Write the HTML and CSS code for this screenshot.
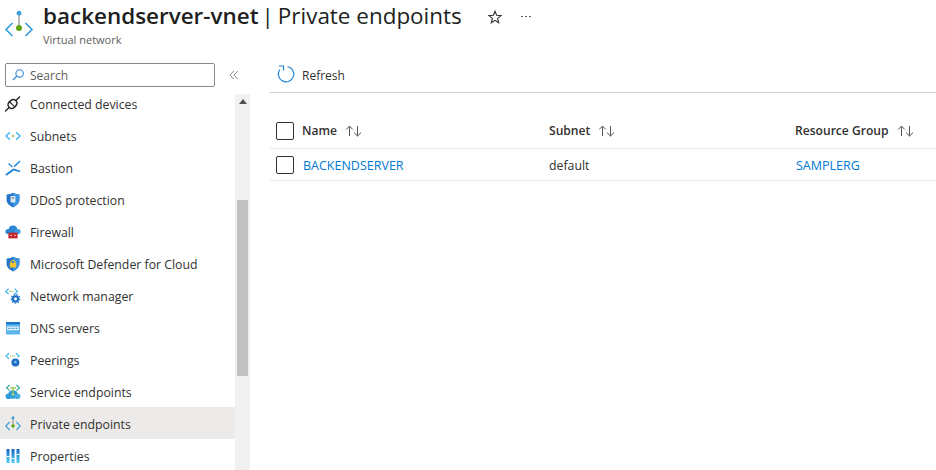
FILE: index.html
```html
<!DOCTYPE html>
<html lang="en">
<head>
<meta charset="utf-8">
<title>backendserver-vnet | Private endpoints</title>
<link rel="stylesheet" href="styles.css">
</head>
<body>
<header class="page-header">
  <svg class="logo" viewBox="0 0 34 34" width="34" height="34">
    <path d="M9.5 13 L3 19.5 L9.5 26 M22.5 13 L29 19.5 L22.5 26" fill="none" stroke="#2f9bdc" stroke-width="1.6"/>
    <path d="M16 3 V18" stroke="#8a8a8a" stroke-width="1.2"/>
    <circle cx="16" cy="3.2" r="2.4" fill="#3d9fdc"/>
    <circle cx="16" cy="18" r="3" fill="#5ea70e"/>
  </svg>
  <div class="titles">
    <h1 class="title"><b>backendserver-vnet</b><span class="sep">|</span>Private endpoints</h1>
    <div class="subtitle">Virtual network</div>
  </div>
  <svg class="star" viewBox="0 0 14 14" width="14" height="14"><path d="M7 1.2 L8.6 5.3 L13 5.6 L9.6 8.4 L10.7 12.7 L7 10.3 L3.3 12.7 L4.4 8.4 L1 5.6 L5.4 5.3 Z" fill="none" stroke="#323130" stroke-width="1.1"/></svg>
  <div class="more"><i></i><i></i><i></i></div>
</header>
<div class="content">
  <aside class="sidebar">
    <div class="search-row">
      <div class="search">
        <svg viewBox="0 0 14 14" width="14" height="14"><circle cx="8.6" cy="5.4" r="3.7" fill="none" stroke="#2b88d8" stroke-width="1.1"/><path d="M5.8 8 L1.8 12.2" stroke="#2b88d8" stroke-width="1.2"/></svg>
        <span>Search</span>
      </div>
      <svg class="collapse" viewBox="0 0 10 10" width="10" height="10"><path d="M4.8 1 L1 5 L4.8 9 M8.8 1 L5 5 L8.8 9" fill="none" stroke="#8f8d8b" stroke-width="1"/></svg>
    </div>
    <div class="nav-wrap">
      <nav class="nav">
        <a class="item"><svg viewBox="0 0 16 16" width="16" height="16"><g transform="rotate(-45 7.5 8)"><rect x="2.8" y="4.4" width="9.4" height="7.2" rx="3.4" fill="#fff" stroke="#252525" stroke-width="1.5"/><path d="M7 3.6 V12.4" stroke="#252525" stroke-width="1.1"/><path d="M-3 8 H3 M12 8 H18" stroke="#252525" stroke-width="1.3"/></g></svg><span>Connected devices</span></a>
        <a class="item"><svg viewBox="0 0 16 16" width="16" height="16"><path d="M4.8 4.4 L1 8 L4.8 11.6 M11.2 4.4 L15 8 L11.2 11.6" fill="none" stroke="#43b9ef" stroke-width="1.5"/><path d="M6.8 8 H9.2 M8 6.8 V9.2" stroke="#76b72a" stroke-width="1"/></svg><span>Subnets</span></a>
        <a class="item"><svg viewBox="0 0 16 16" width="16" height="16"><path d="M1 15 L8.5 9.5 L15 11.5" fill="none" stroke="#1a7fd6" stroke-width="1.8"/><path d="M3.5 3.5 L7.5 7 M9.2 6.6 L15 1" fill="none" stroke="#2a8fe0" stroke-width="1.6"/></svg><span>Bastion</span></a>
        <a class="item"><svg viewBox="0 0 16 16" width="16" height="16"><path d="M8 0.8 Q11 2.8 14.4 2.6 V8 Q14.4 12.5 8 15.4 Q1.6 12.5 1.6 8 V2.6 Q5 2.8 8 0.8 Z" fill="#2274c9"/><path d="M8 0.8 Q11 2.8 14.4 2.6 V8 Q14.4 12.5 8 15.4 Z" fill="#3a93e3"/><rect x="5.6" y="4" width="4.8" height="6.6" rx=".6" fill="#dfe9f2"/><circle cx="8" cy="6" r="1" fill="#6f7f8e"/></svg><span>DDoS protection</span></a>
        <a class="item"><svg viewBox="0 0 16 16" width="16" height="16"><ellipse cx="8" cy="5.5" rx="4.2" ry="4" fill="#2b87d6"/><ellipse cx="3.4" cy="7.5" rx="3" ry="2.6" fill="#2b87d6"/><ellipse cx="12.6" cy="7.5" rx="3" ry="2.6" fill="#3d9ce6"/><rect x="3.4" y="8.6" width="9.2" height="5.8" fill="#c4262e"/><path d="M5 11.4 H7 M9 11.4 H11" stroke="#f2b0b0" stroke-width="1"/></svg><span>Firewall</span></a>
        <a class="item"><svg viewBox="0 0 16 16" width="16" height="16"><path d="M8 0.8 Q11 2.8 14.4 2.6 V8 Q14.4 12.5 8 15.4 Q1.6 12.5 1.6 8 V2.6 Q5 2.8 8 0.8 Z" fill="#2274c9"/><path d="M8 0.8 Q11 2.8 14.4 2.6 V8 Q14.4 12.5 8 15.4 Z" fill="#3a93e3"/><rect x="4.8" y="6.8" width="6.4" height="4.6" rx=".5" fill="#f4c430"/><path d="M6 7 V5.6 Q8 3 10 5.6 V7" fill="none" stroke="#f4c430" stroke-width="1.1"/></svg><span>Microsoft Defender for Cloud</span></a>
        <a class="item"><svg viewBox="0 0 16 16" width="16" height="16"><path d="M3.6 0.8 L0.8 3.4 L3.6 6 M9.6 0.8 L12.4 3.4 L9.6 6" fill="none" stroke="#43b9ef" stroke-width="1.2"/><path d="M4.6 3.4 H8.6" stroke="#7cb82f" stroke-width="1.2" stroke-dasharray="1 .8"/><circle cx="10.5" cy="10.8" r="2.6" fill="none" stroke="#1b6ec2" stroke-width="2"/><circle cx="10.5" cy="10.8" r="4.3" fill="none" stroke="#1b6ec2" stroke-width="1.2" stroke-dasharray="1.6 1.35"/></svg><span>Network manager</span></a>
        <a class="item"><svg viewBox="0 0 16 16" width="16" height="16"><rect x="1" y="2" width="14" height="12.5" rx=".5" fill="#5db4ec"/><rect x="1" y="2" width="14" height="2.4" fill="#1c78cf"/><rect x="2.2" y="6.6" width="11.6" height="3.6" fill="#e9f5fc"/><path d="M3 8.4 H13" stroke="#3a93d6" stroke-width="1.2" stroke-dasharray="1 .6"/></svg><span>DNS servers</span></a>
        <a class="item"><svg viewBox="0 0 16 16" width="16" height="16"><path d="M4 1.2 L1 4 L4 6.8 M11 1.2 L14 4 L12.5 5.4" fill="none" stroke="#43b9ef" stroke-width="1.2"/><path d="M5 4 H9.6" stroke="#7cb82f" stroke-width="1.2" stroke-dasharray="1 .8"/><circle cx="10.4" cy="10.6" r="4" fill="#1f6fc4"/><circle cx="10.4" cy="10" r="1.2" fill="#8cc0ea"/></svg><span>Peerings</span></a>
        <a class="item"><svg viewBox="0 0 16 16" width="16" height="16"><ellipse cx="8" cy="10.5" rx="4.8" ry="4.2" fill="#2f9bd8"/><ellipse cx="3.6" cy="12.2" rx="3" ry="2.8" fill="#2f9bd8"/><ellipse cx="12.4" cy="12.2" rx="3" ry="2.8" fill="#49b0e6"/><path d="M4.6 1 L1.6 3.8 L4.6 6.6 M11.4 1 L14.4 3.8 L11.4 6.6" fill="none" stroke="#3aa9a0" stroke-width="1.2"/><path d="M5 3.8 H11 M8 4 V11" stroke="#8fc641" stroke-width="1.2"/><circle cx="8" cy="10.5" r="1.2" fill="#b8dd7a"/></svg><span>Service endpoints</span></a>
        <a class="item active"><svg viewBox="0 0 16 16" width="16" height="16"><path d="M4.6 6 L0.8 10 L4.6 14 M11.4 6 L15.2 10 L11.4 14" fill="none" stroke="#3a9bdc" stroke-width="1.1"/><path d="M8 2 V10" stroke="#888" stroke-width="1"/><circle cx="8" cy="1.8" r="1.5" fill="#3a9bdc"/><circle cx="8" cy="10" r="1.7" fill="#5ea70e"/></svg><span>Private endpoints</span></a>
        <a class="item"><svg viewBox="0 0 16 16" width="16" height="16"><defs><linearGradient id="bar" x1="0" y1="0" x2="0" y2="1"><stop offset="0" stop-color="#1366c4"/><stop offset="1" stop-color="#4fd0f2"/></linearGradient></defs><rect x="1.5" y="1" width="3" height="14" fill="url(#bar)"/><rect x="6.5" y="1" width="3" height="14" fill="url(#bar)"/><rect x="11.5" y="1" width="3" height="14" fill="url(#bar)"/><rect x="1.5" y="8" width="3" height="1" fill="#fff"/><rect x="6.5" y="10" width="3" height="1" fill="#fff"/><rect x="11.5" y="6" width="3" height="1" fill="#fff"/></svg><span>Properties</span></a>
      </nav>
      <div class="scrollbar">
        <svg class="arrow" viewBox="0 0 8 5" width="8" height="5"><path d="M4 0 L8 5 H0 Z" fill="#505050"/></svg>
        <div class="thumb"></div>
      </div>
    </div>
  </aside>
  <main class="main">
    <div class="toolbar">
      <svg viewBox="0 0 18 18" width="18" height="18"><path d="M10.5 1.5 A7.7 7.7 0 1 1 2.9 4.5" fill="none" stroke="#1f86d9" stroke-width="1.2"/><path d="M2 1 H6.5 V5.5" fill="none" stroke="#1f86d9" stroke-width="1.2"/></svg>
      <span>Refresh</span>
    </div>
    <div class="table">
      <div class="row head">
        <div class="check"></div>
        <div class="cell name"><span>Name</span><svg class="sort" viewBox="0 0 17 12" width="17" height="12"><path d="M4.5 11 V1.5 M1.2 4.5 L4.5 1 L7.8 4.5 M12.5 1 V10.8 M9 7.6 L12.5 11 L16 7.6" fill="none" stroke="#555" stroke-width="1"/></svg></div>
        <div class="cell subnet"><span>Subnet</span><svg class="sort" viewBox="0 0 17 12" width="17" height="12"><path d="M4.5 11 V1.5 M1.2 4.5 L4.5 1 L7.8 4.5 M12.5 1 V10.8 M9 7.6 L12.5 11 L16 7.6" fill="none" stroke="#555" stroke-width="1"/></svg></div>
        <div class="cell group"><span>Resource Group</span><svg class="sort" viewBox="0 0 17 12" width="17" height="12"><path d="M4.5 11 V1.5 M1.2 4.5 L4.5 1 L7.8 4.5 M12.5 1 V10.8 M9 7.6 L12.5 11 L16 7.6" fill="none" stroke="#555" stroke-width="1"/></svg></div>
      </div>
      <div class="row body">
        <div class="check"></div>
        <a class="cell name link">BACKENDSERVER</a>
        <div class="cell subnet">default</div>
        <a class="cell group link">SAMPLERG</a>
      </div>
    </div>
  </main>
</div>
</body>
</html>
```
FILE: styles.css
```css
* { box-sizing: border-box; }
html, body { margin: 0; height: 100%; }
body {
  width: 936px; height: 470px; overflow: hidden; background: #fff;
  font-family: "Open Sans", "Noto Sans", sans-serif; font-size: 12px; color: #323130;
  display: flex; flex-direction: column;
}
.page-header { height: 58px; display: flex; align-items: flex-start; padding-left: 3px; flex: none; }
.logo { margin-top: 10px; flex: none; }
.titles { margin-left: 6px; }
.title { margin: 0; font-size: 22.45px; line-height: 32px; font-weight: 400; color: #201f1e; white-space: nowrap; }
.title b { font-weight: 600; }
.sep { margin: 0 4px 0 3px; color: #201f1e; }
.subtitle { font-size: 11px; line-height: 14px; color: #605e5c; margin-top: 1px; }
.star { margin: 10px 0 0 26px; flex: none; }
.more { display: flex; gap: 2px; margin: 16px 0 0 19px; }
.more i { width: 2px; height: 1px; background: #605e5c; }
.content { flex: 1; display: flex; min-height: 0; }
.sidebar { width: 250px; flex: none; display: flex; flex-direction: column; min-height: 0; }
.search-row { height: 36px; padding: 5px 0 0 5px; display: flex; align-items: flex-start; flex: none; }
.search {
  width: 210px; height: 24px; border: 1px solid #8a8886; border-radius: 2px;
  display: flex; align-items: center; padding-left: 5px; gap: 5px; color: #605e5c;
}
.collapse { margin: 7px 0 0 14px; }
.nav-wrap { flex: 1; display: flex; min-height: 0; overflow: hidden; }
.nav { width: 235px; flex: none; margin-top: -7px; }
.item { display: flex; align-items: center; height: 32px; padding: 2px 0 0 5px; gap: 9px; white-space: nowrap; font-size: 12.3px; }
.item svg { flex: none; }
.item.active { background: #edebe9; }
.scrollbar { width: 15px; flex: none; background: #f1f1f1; display: flex; flex-direction: column; align-items: center; padding-top: 5px; }
.arrow { flex: none; }
.thumb { width: 11px; height: 176px; background: #c1c1c1; margin-top: 96px; flex: none; }
.main { flex: 1; min-width: 0; padding-left: 20px; }
.toolbar { height: 35px; border-bottom: 1px solid #d2d0ce; display: flex; align-items: center; gap: 7px; padding: 0 0 2px 7px; }
.toolbar span { margin-top: 3px; }
.table { margin-top: 20px; }
.row { display: grid; grid-template-columns: 26px 247px 246px 1fr; align-items: center; padding-left: 6px; border-bottom: 1px solid #edebe9; }
.row.head { height: 36px; font-weight: 600; font-size: 12.1px; }
.row.body { height: 32px; }
.row.body .cell { padding-top: 2px; font-size: 12.3px; }
.check { width: 18px; height: 18px; border: 1px solid #323130; border-radius: 2px; }
.cell { display: flex; align-items: center; white-space: nowrap; }
.sort { margin-left: 8px; flex: none; }
.row.body .link { color: #0078d4; padding-left: 1px; font-size: 12.5px; }
```
